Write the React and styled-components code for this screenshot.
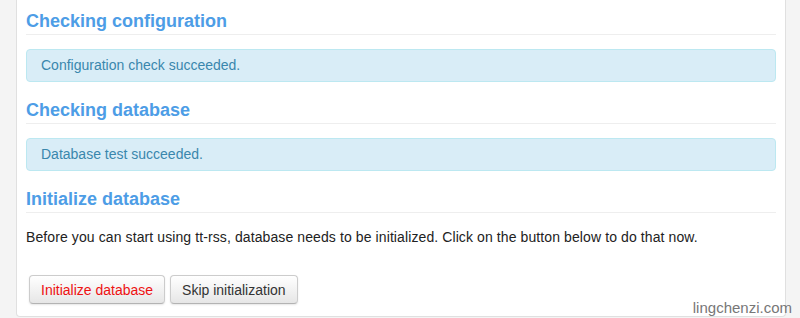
import styled, { createGlobalStyle } from "styled-components";

const Global = createGlobalStyle`
  html, body {
    margin: 0;
    padding: 0;
    background: #f4f4f4;
    font-family: "Liberation Sans", Arial, sans-serif;
  }
`;

const Page = styled.div`
  position: relative;
  height: 318px;
  overflow: hidden;
  padding-left: 16px;
`;

const Panel = styled.div`
  width: 750px;
  background: #fff;
  border: 1px solid #e0e0e0;
  border-top: none;
  border-radius: 0 0 4px 4px;
  padding: 11px 9px 12px;
`;

const Heading = styled.h2`
  margin: ${(p) => (p.$first ? "0" : "18px")} 0 14px;
  padding: 0 0 3px;
  font-size: 18px;
  line-height: 20px;
  font-weight: bold;
  color: #4d9de6;
  border-bottom: 1px solid #eeeeee;
`;

const Alert = styled.div`
  padding: 7px 14px;
  font-size: 14px;
  line-height: 17px;
  color: #3a87ad;
  background: #d9edf7;
  border: 1px solid #bce8f1;
  border-radius: 4px;
`;

const Text = styled.p`
  margin: 16px 0 0;
  font-size: 14px;
  line-height: 17px;
  letter-spacing: 0.1px;
  color: #222;
`;

const Buttons = styled.div`
  display: flex;
  gap: 5px;
  margin: 29px 0 0 3px;
`;

const Button = styled.button`
  height: 29px;
  padding: 0 11px;
  font-family: "Liberation Sans", Arial, sans-serif;
  font-size: 14px;
  color: ${(p) => (p.$danger ? "#ee1111" : "#333")};
  background: linear-gradient(#ffffff, #e6e6e6);
  border: 1px solid #cccccc;
  border-bottom-color: #b3b3b3;
  border-radius: 4px;
  box-shadow: 0 1px 2px rgba(0, 0, 0, 0.1);
`;

const Watermark = styled.span`
  position: absolute;
  right: 8px;
  bottom: 2px;
  font-family: "Liberation Sans", Arial, sans-serif;
  font-size: 15px;
  color: #777;
`;

export default function App() {
  return (
    <>
      <Global />
      <Page>
        <Panel>
          <Heading $first>Checking configuration</Heading>
          <Alert>Configuration check succeeded.</Alert>
          <Heading>Checking database</Heading>
          <Alert>Database test succeeded.</Alert>
          <Heading>Initialize database</Heading>
          <Text>
            Before you can start using tt-rss, database needs to be initialized.
            Click on the button below to do that now.
          </Text>
          <Buttons>
            <Button $danger>Initialize database</Button>
            <Button>Skip initialization</Button>
          </Buttons>
        </Panel>
        <Watermark>lingchenzi.com</Watermark>
      </Page>
    </>
  );
}
